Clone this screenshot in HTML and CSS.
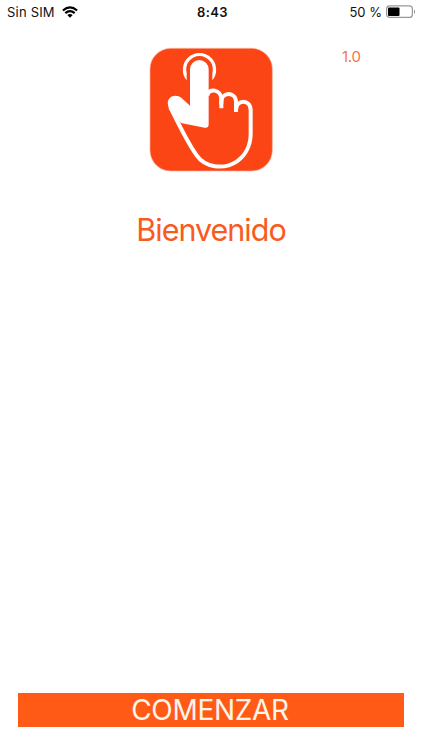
FILE: index.html
```html
<!DOCTYPE html>
<html lang="es">
<head>
<meta charset="utf-8">
<title>Bienvenido</title>
<link rel="stylesheet" href="styles.css">
</head>
<body>
<header class="status">
  <div class="carrier"><span>Sin SIM</span>
    <svg class="wifi" width="16" height="12" viewBox="0 0 16 12"><g fill="none" stroke="#000" stroke-width="2.2"><path d="M.9 4.5Q8-1.7 15.1 4.5"/><path d="M3.3 7.2Q8 3.2 12.7 7.2"/></g><path d="M5.3 9.1Q8 7 10.7 9.1L8 11.8Z"/></svg>
  </div>
  <time class="clock">8:43</time>
  <div class="power"><span>50 %</span>
    <svg class="battery" width="30" height="14" viewBox="0 0 30 14"><rect x=".6" y=".9" width="25.8" height="11.5" rx="3" fill="#fff" stroke="#999" stroke-width="1.2"/><rect x="2" y="2.5" width="11.5" height="8.5" rx="1"/><path d="M28 4.5Q30 6.7 28 8.9Z" fill="#888"/></svg>
  </div>
</header>
<main class="welcome">
  <div class="brand">
    <svg class="logo" width="132" height="132" viewBox="0 0 396 396">
      <rect x="15" y="16" width="367" height="368" rx="62" fill="#fb4515" stroke="#fbb49d" stroke-width="2"/>
      <path d="M125 112A50 50 0 1 1 202 112V90A40 40 0 1 0 125 90Z" fill="#fff"/>
      <path d="M135 188V79a28 28 0 0 1 56 0V244q0 12-12 10L108 240L74 201Q65 182 70 171C77 155 98 155 109 164Z" fill="#fff"/>
      <g fill="none" stroke="#fff" stroke-width="12"><path d="M76 193C96 234 130 304 155 337C180 373 235 382 276 355C303 337 316 305 317 275V202C317 168 273 168 273 202V207"/><path d="M273 204V178C273 145 229 145 229 178V196"/><path d="M229 184V169C229 139 190 133 187 158"/></g>
    </svg>
    <span class="version">1.0</span>
  </div>
  <h1 class="title">Bienvenido</h1>
  <button class="start" type="button">COMENZAR</button>
</main>
</body>
</html>
```
FILE: styles.css
```css
* { box-sizing: border-box; }
body {
  margin: 0;
  height: 750px;
  display: flex;
  flex-direction: column;
  background: #fff;
  color: #111;
  font-family: Inter, "Liberation Sans", sans-serif;
}
.status {
  height: 24px;
  padding: 0 6px 0 7px;
  display: grid;
  grid-template-columns: 1fr auto 1fr;
  align-items: center;
  font-size: 13px;
  line-height: 24px;
}
.carrier, .power { display: flex; align-items: center; }
.carrier { gap: 7px; letter-spacing: .2px; }
.power { justify-content: flex-end; gap: 4px; }
.clock { padding-left: 2px; font-weight: 600; letter-spacing: .4px; }
.welcome {
  flex: 1;
  display: flex;
  flex-direction: column;
  padding: 19px 18px 23px;
}
.brand {
  display: grid;
  grid-template-columns: 127px 132px 1fr;
}
.logo { grid-column: 2; }
.version {
  padding: 4px 0 0 65px;
  color: #f77645;
  font-size: 15px;
  line-height: 20px;
  letter-spacing: -.3px;
}
.title {
  margin: 35px 0 0;
  color: #f75c1e;
  font-size: 30.5px;
  font-weight: 400;
  line-height: 40px;
  letter-spacing: -1px;
  text-align: center;
}
.start {
  margin-top: auto;
  width: 386px;
  height: 34px;
  padding: 1px 2px 0 0;
  border: 0;
  background: #ff5b16;
  color: #fff5ec;
  font: 400 28px/33px Inter, "Liberation Sans", sans-serif;
  letter-spacing: -.3px;
}
```
